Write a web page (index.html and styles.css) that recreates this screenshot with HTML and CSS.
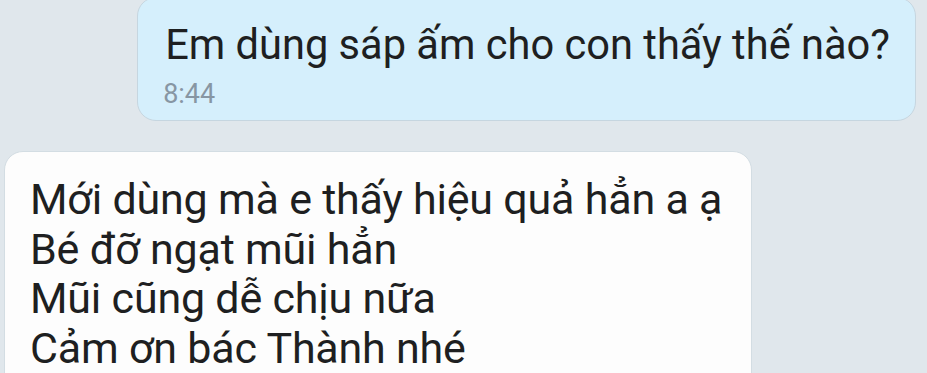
FILE: index.html
```html
<!DOCTYPE html>
<html lang="vi">
<head>
    <meta charset="UTF-8">
    <meta name="viewport" content="width=device-width, initial-scale=1.0">
    <title>Tin nhắn</title>
    <link rel="stylesheet" href="styles.css">
</head>
<body>
    <div class="chat">
        <div class="row sent">
            <div class="bubble bubble-sent">
                <div class="text">Em dùng sáp ấm cho con thấy thế nào?</div>
                <div class="time">8:44</div>
            </div>
        </div>

        <div class="row received">
            <div class="bubble bubble-received">
                <div class="text">Mới dùng mà e thấy hiệu quả hẳn a ạ</div>
                <div class="text">Bé đỡ ngạt mũi hẳn</div>
                <div class="text">Mũi cũng dễ chịu nữa</div>
                <div class="text">Cảm ơn bác Thành nhé</div>
            </div>
        </div>
    </div>
</body>
</html>
```

FILE: styles.css
```css
html, body {
    margin: 0;
    height: 100%;
    overflow: hidden;
}

body {
    background: #e0e7ec;
    font-family: 'Roboto', 'Noto Sans', sans-serif;
    color: #1e1f21;
}

.chat {
    display: flex;
    flex-direction: column;
    gap: 30px;
    margin-top: -3px;
}

.row {
    display: flex;
}

.row.sent {
    justify-content: flex-end;
    padding-right: 11px;
}

.row.received {
    justify-content: flex-start;
    padding-left: 4px;
}

.bubble {
    border-radius: 19px;
    box-sizing: border-box;
}

.bubble-sent {
    background: #d5effc;
    border: 1px solid #c6d6e0;
    padding: 23px 25px 10px 27px;
}

.bubble-sent .text {
    font-size: 41.6px;
    line-height: 48px;
}

.time {
    margin-top: 10px;
    margin-left: -2px;
    font-size: 27px;
    line-height: 31px;
    color: #8796a3;
}

.bubble-received {
    background: #fdfdfd;
    border: 1px solid #d3dde3;
    padding: 23px 29px 30px 25px;
}

.bubble-received .text {
    font-size: 43px;
    line-height: 49.5px;
    letter-spacing: -0.2px;
}
```
